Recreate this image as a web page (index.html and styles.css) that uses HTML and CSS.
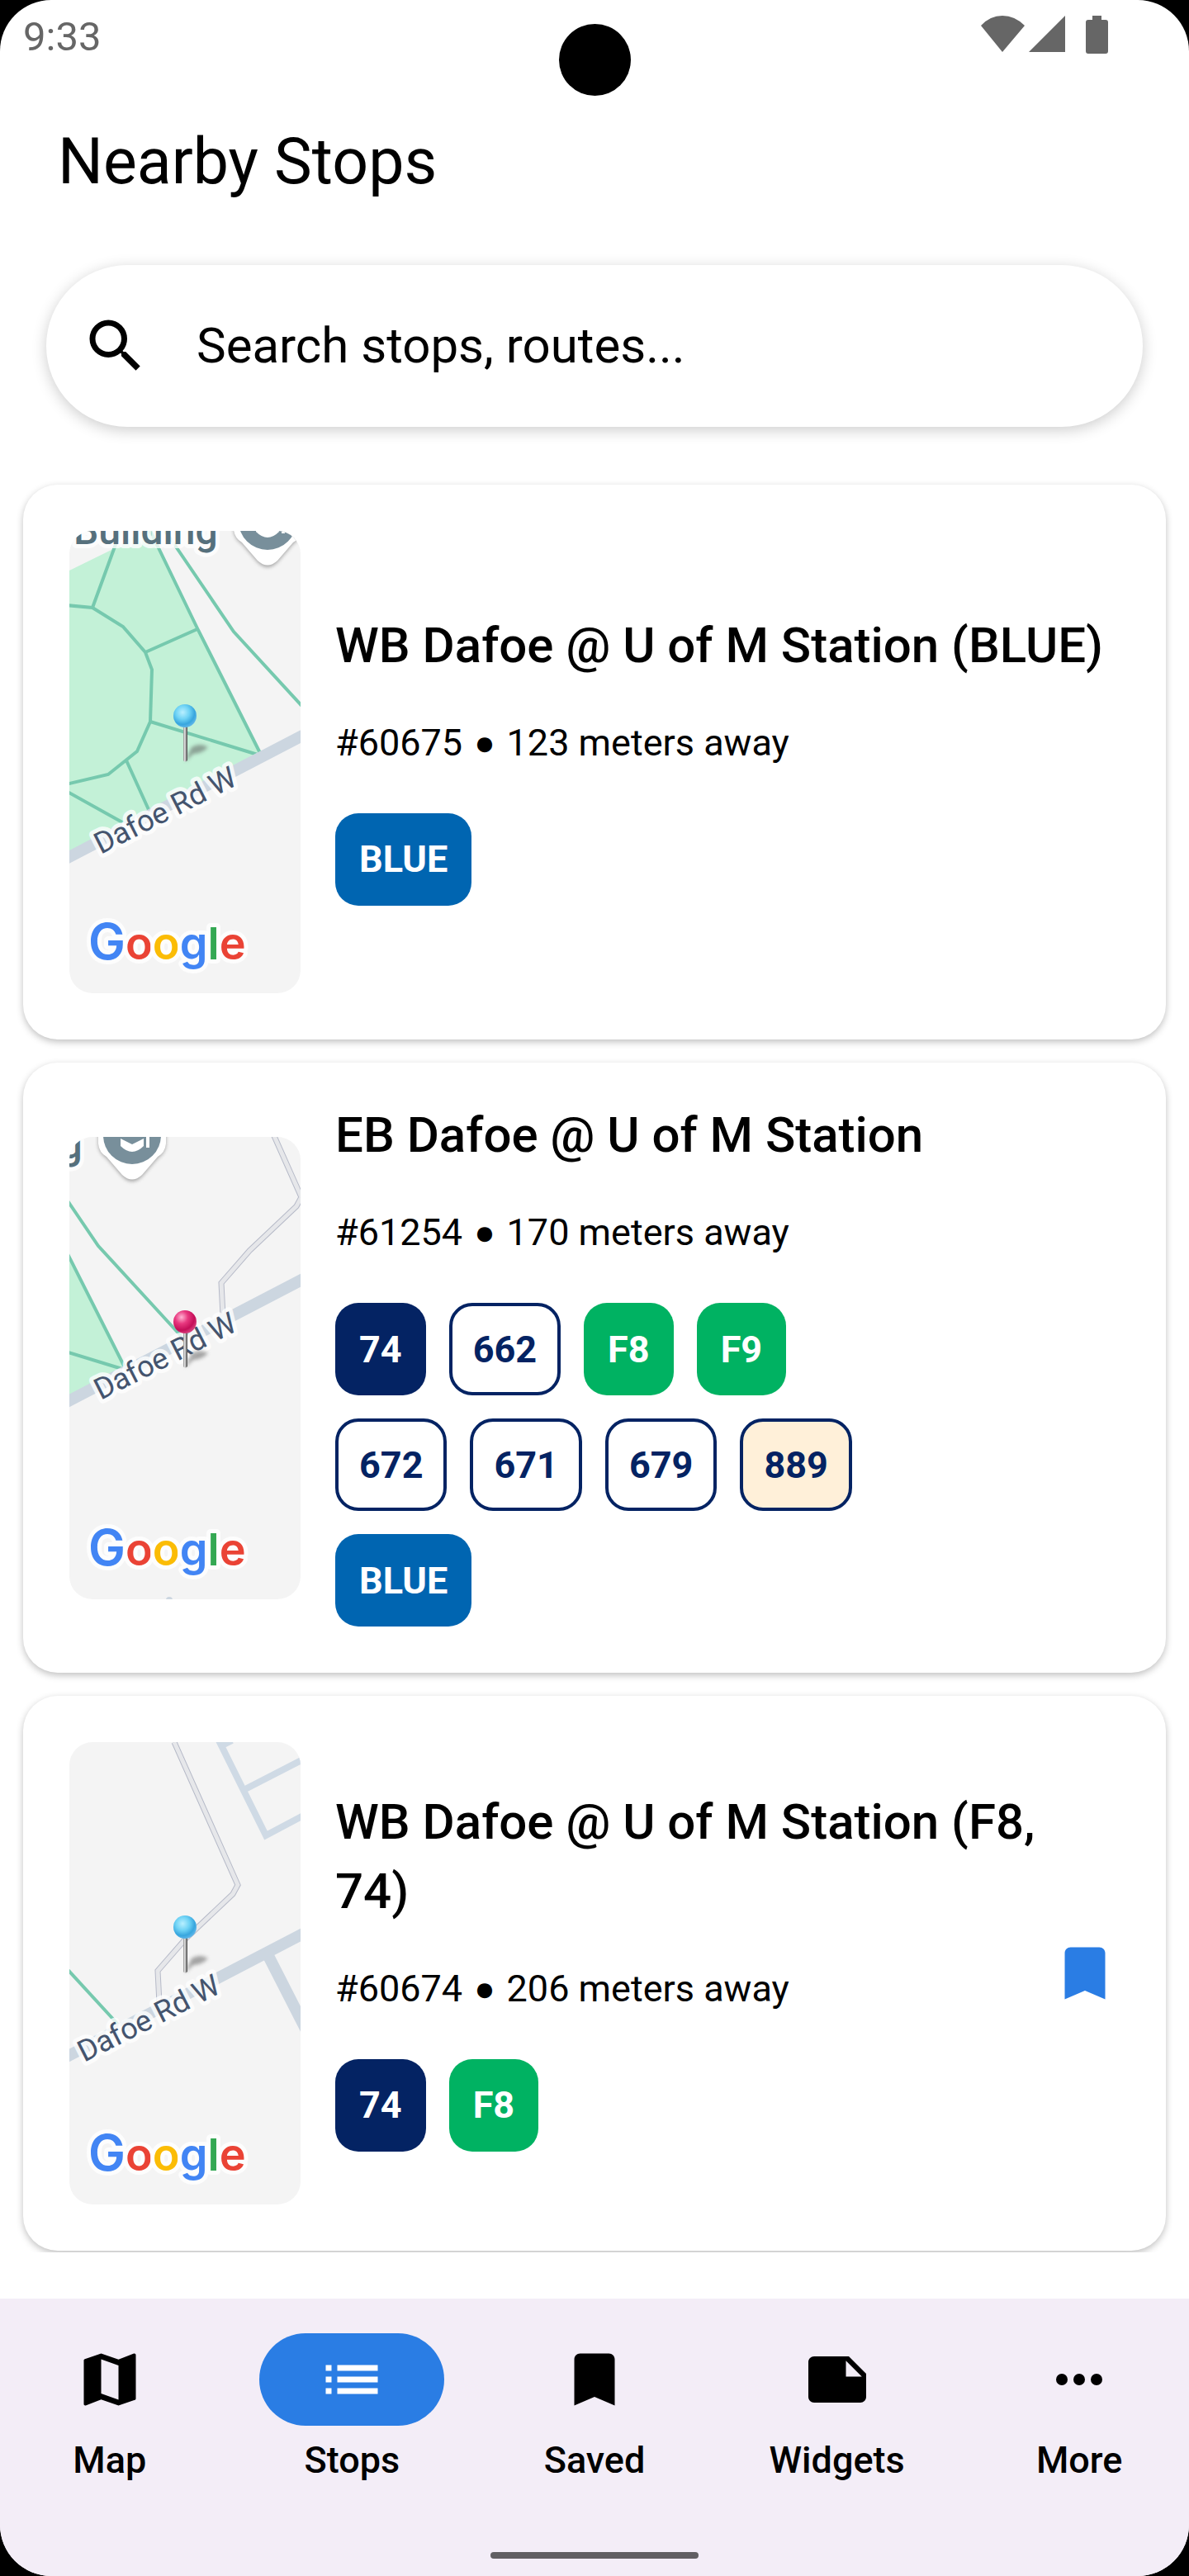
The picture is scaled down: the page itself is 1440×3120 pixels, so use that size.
FILE: index.html
```html
<!DOCTYPE html>
<html lang="en">
<head>
<meta charset="utf-8">
<meta name="viewport" content="width=device-width, initial-scale=1">
<title>Nearby Stops</title>
<link rel="stylesheet" href="styles.css">
</head>
<body>
<svg class="defs" aria-hidden="true">
  <defs>
    <radialGradient id="ball-blue" cx="40%" cy="35%" r="65%">
      <stop offset="0" stop-color="#b9efff"/>
      <stop offset=".45" stop-color="#6fd3f5"/>
      <stop offset=".8" stop-color="#38a6de"/>
      <stop offset="1" stop-color="#5ab4e8"/>
    </radialGradient>
    <radialGradient id="ball-pink" cx="35%" cy="30%" r="70%">
      <stop offset="0" stop-color="#ffb3d2"/>
      <stop offset=".4" stop-color="#e8387f"/>
      <stop offset=".8" stop-color="#c40e58"/>
      <stop offset="1" stop-color="#d43a78"/>
    </radialGradient>
    <linearGradient id="stem">
      <stop offset="0" stop-color="#8a8a8a"/>
      <stop offset=".35" stop-color="#e6e6e6"/>
      <stop offset="1" stop-color="#3c3c3c"/>
    </linearGradient>
    <filter id="soft" x="-30%" y="-30%" width="160%" height="160%">
      <feGaussianBlur stdDeviation="2"/>
    </filter>

    <g id="streets">
      <path fill="#c3f1d7" d="M0 48 55 21 88 0H100L155 118 231 269 0 388Z"/>
      <g class="footpath">
        <path d="M-4 90 28 93 65 116 92 147 100 168 98 231 82 267 47 295-4 307"/>
        <path d="M28 93 62 0M92 147 155 119M98 0 155 118 231 269M98 231 228 271M69 278 98 342M-4 315 66 354"/>
        <path d="M116 0 199 122 300 232"/>
      </g>
      <path class="service-edge" d="M368-110 445 63 439 74 382 128 348 167 350 206"/>
      <path class="service" d="M368-110 445 63 439 74 382 128 348 167 350 206"/>
      <path class="lane" d="M422-112 479 3 526-22M452-52 526-90M424-105 438-112"/>
      <path class="road" d="M-8 399 530 119M480 145 530 243"/>
    </g>

    <g id="poi">
      <path filter="url(#soft)" fill="#777" opacity=".6" d="M-41-42Q-40-32-31-26L-12-4Q0 8 12-4L31-26Q40-32 41-42L41-60H-41Z"/>
      <path fill="#fff" d="M-41-44Q-40-33-31-28L-12-6Q0 5 12-6L31-28Q40-33 41-44L41-60H-41Z"/>
      <circle cy="-54" r="35" fill="#788f9b"/>
      <path fill="#fff" d="M-14-50 0-43 14-50V-41Q0-27-14-41ZM17-56H21V-39H17Z"/>
    </g>

    <g id="pin-base">
      <path filter="url(#soft)" fill="#555" opacity=".5" d="M140 280 148 262Q158 256 168 262 160 270 150 270Z"/>
      <path fill="url(#stem)" d="M138 234H143V278Q140 281 138 278Z"/>
    </g>
  </defs>
</svg>

<div class="screen">
  <span class="camera"></span>

  <div class="status">
    <time>9:33</time>
    <svg class="status-icons" viewBox="0 0 154 49" aria-hidden="true">
      <path d="M0 15Q11 3 26 3T53 15L26 47ZM102 3V47H58ZM135 3H146V8H151Q154 8 154 11V46Q154 49 151 49H130Q127 49 127 46V11Q127 8 130 8H135Z"/>
    </svg>
  </div>

  <h1 class="page-title">Nearby Stops</h1>

  <label class="search">
    <svg class="icon" viewBox="0 0 24 24" aria-hidden="true"><path d="M15.5 14h-.79l-.28-.27A6.471 6.471 0 0 0 16 9.5 6.5 6.5 0 1 0 9.500 16c1.610 0 3.090-.59 4.230-1.570l.27.28v.79l5 4.990L20.490 19l-4.990-5zm-6 0C7.010 14 5 11.990 5 9.500S7.010 5 9.500 5 14 7.010 14 9.500 11.990 14 9.500 14z"/></svg>
    <input class="search-input" type="text" placeholder="Search stops, routes..." aria-label="Search stops, routes">
  </label>

  <main class="stops">
    <article class="card">
      <svg class="map" viewBox="0 0 280 560" role="img" aria-label="Map of stop 60675">
        <use href="#streets"/>
        <text class="place" x="5" y="16">Building</text>
        <use href="#poi" x="240" y="42"/>
        <text class="street" transform="translate(38 392) rotate(-27)">Dafoe Rd W</text>
        <use href="#pin-base"/>
        <circle cx="140" cy="224" r="14" fill="url(#ball-blue)"/>
        <text class="brand" x="23" y="519"><tspan class="brand-cap g-blue">G</tspan><tspan class="g-red">o</tspan><tspan class="g-yellow">o</tspan><tspan class="g-blue">g</tspan><tspan class="g-green">l</tspan><tspan class="g-red">e</tspan></text>
      </svg>
      <div class="info">
        <h2 class="name">WB Dafoe @ U of M Station (BLUE)</h2>
        <p class="meta"><span>#60675</span><span class="dot">●</span><span>123 meters away</span></p>
        <ul class="routes">
          <li class="route blue">BLUE</li>
        </ul>
      </div>
    </article>

    <article class="card">
      <svg class="map" viewBox="0 0 280 560" role="img" aria-label="Map of stop 61254">
        <use href="#streets" x="-164" y="10"/>
        <text class="place" x="-159" y="26">Building</text>
        <use href="#poi" x="76" y="52"/>
        <circle cx="121" cy="561" r="4" fill="#ccd6e0"/>
        <text class="street" transform="translate(38 319) rotate(-27)">Dafoe Rd W</text>
        <use href="#pin-base"/>
        <circle cx="140" cy="224" r="14" fill="url(#ball-pink)"/>
        <text class="brand" x="23" y="519"><tspan class="brand-cap g-blue">G</tspan><tspan class="g-red">o</tspan><tspan class="g-yellow">o</tspan><tspan class="g-blue">g</tspan><tspan class="g-green">l</tspan><tspan class="g-red">e</tspan></text>
      </svg>
      <div class="info">
        <h2 class="name">EB Dafoe @ U of M Station</h2>
        <p class="meta"><span>#61254</span><span class="dot">●</span><span>170 meters away</span></p>
        <ul class="routes">
          <li class="route navy">74</li>
          <li class="route outline">662</li>
          <li class="route green">F8</li>
          <li class="route green">F9</li>
          <li class="route outline">672</li>
          <li class="route outline">671</li>
          <li class="route outline">679</li>
          <li class="route outline cream">889</li>
          <li class="route blue">BLUE</li>
        </ul>
      </div>
    </article>

    <article class="card">
      <svg class="map" viewBox="0 0 280 560" role="img" aria-label="Map of stop 60674">
        <use href="#streets" x="-241" y="110"/>
        <text class="street" transform="translate(18 388) rotate(-27)">Dafoe Rd W</text>
        <use href="#pin-base"/>
        <circle cx="140" cy="224" r="14" fill="url(#ball-blue)"/>
        <text class="brand" x="23" y="519"><tspan class="brand-cap g-blue">G</tspan><tspan class="g-red">o</tspan><tspan class="g-yellow">o</tspan><tspan class="g-blue">g</tspan><tspan class="g-green">l</tspan><tspan class="g-red">e</tspan></text>
      </svg>
      <div class="info">
        <h2 class="name">WB Dafoe @ U of M Station (F8, 74)</h2>
        <p class="meta"><span>#60674</span><span class="dot">●</span><span>206 meters away</span></p>
        <ul class="routes">
          <li class="route navy">74</li>
          <li class="route green">F8</li>
        </ul>
      </div>
      <button class="save" type="button" aria-label="Remove from saved">
        <svg class="icon" viewBox="0 0 24 24" aria-hidden="true"><path d="M17 3H7c-1.100 0-1.990.9-1.990 2L5 21l7-3 7 3V5c0-1.100-.9-2-2-2z"/></svg>
      </button>
    </article>
  </main>

  <footer class="bottom">
    <nav class="tabs">
      <a class="tab" href="#map">
        <span class="tab-icon"><svg class="icon" viewBox="0 0 24 24" aria-hidden="true"><path d="M20.5 3l-.16.03L15 5.1 9 3 3.360 4.900c-.21.07-.36.25-.36.48V20.500c0 .28.22.5.5.5l.16-.03L9 18.900l6 2.100 5.640-1.900c.21-.07.36-.25.36-.48V3.500c0-.28-.22-.5-.5-.5zM15 19l-6-2.110V5l6 2.110V19z"/></svg></span>
        Map
      </a>
      <a class="tab active" href="#stops" aria-current="page">
        <span class="tab-icon"><svg class="icon" viewBox="0 0 24 24" aria-hidden="true"><path d="M3 13h2v-2H3v2zm0 4h2v-2H3v2zm0-8h2V7H3v2zm4 4h14v-2H7v2zm0 4h14v-2H7v2zM7 7v2h14V7H7z"/></svg></span>
        Stops
      </a>
      <a class="tab" href="#saved">
        <span class="tab-icon"><svg class="icon" viewBox="0 0 24 24" aria-hidden="true"><path d="M17 3H7c-1.100 0-1.990.9-1.990 2L5 21l7-3 7 3V5c0-1.100-.9-2-2-2z"/></svg></span>
        Saved
      </a>
      <a class="tab" href="#widgets">
        <span class="tab-icon"><svg class="icon" viewBox="0 0 24 24" aria-hidden="true"><path d="M22 10l-6-6H4c-1.100 0-2 .9-2 2v12.010c0 1.100.9 1.990 2 1.990l16-.01c1.100 0 2-.89 2-1.990v-8zm-7-4.500l5.500 5.500H15V5.500z"/></svg></span>
        Widgets
      </a>
      <a class="tab" href="#more">
        <span class="tab-icon"><svg class="icon" viewBox="0 0 24 24" aria-hidden="true"><circle cx="6" cy="12" r="2"/><circle cx="12" cy="12" r="2"/><circle cx="18" cy="12" r="2"/></svg></span>
        More
      </a>
    </nav>
    <span class="handle"></span>
  </footer>
</div>
</body>
</html>
```
FILE: styles.css
```css
* {
  box-sizing: border-box;
}

body {
  margin: 0;
  background: #000;
  color: #000;
  font-family: Roboto, "Liberation Sans", sans-serif;
}

.defs {
  position: absolute;
  width: 0;
  height: 0;
}

.screen {
  position: relative;
  display: flex;
  flex-direction: column;
  min-height: 100vh;
  overflow: hidden;
  border-radius: 62px;
  background: #fff;
}

/* Status bar */
.camera {
  position: absolute;
  top: 29px;
  left: 50%;
  width: 87px;
  height: 87px;
  margin-left: -43px;
  border-radius: 50%;
  background: #000;
}

.status {
  display: flex;
  align-items: flex-start;
  justify-content: space-between;
  padding: 16px 98px 0 28px;
  color: #666;
  font-size: 49px;
  line-height: 58px;
}

.status-icons {
  width: 154px;
  height: 49px;
  fill: #666;
}

.page-title {
  margin: 77px 70px 80px;
  font-size: 77px;
  font-weight: 400;
  line-height: 90px;
}

.icon {
  display: block;
  flex: none;
  width: 84px;
  height: 84px;
  fill: currentColor;
}

/* Search */
.search {
  display: flex;
  align-items: center;
  gap: 56px;
  margin: 0 56px;
  padding: 56px 42px;
  border-radius: 98px;
  background: #fff;
  box-shadow: 0 4px 18px rgba(0, 0, 0, .2);
}

.search-input {
  flex: 1;
  min-width: 0;
  height: 84px;
  padding: 0;
  border: 0;
  outline: 0;
  background: none;
  color: #000;
  font: 400 60px/84px Roboto, "Liberation Sans", sans-serif;
}

.search-input::placeholder {
  color: #000;
  opacity: 1;
}

/* Stop cards */
.stops {
  display: flex;
  flex-direction: column;
  gap: 28px;
  margin: 42px 0 56px;
  padding: 28px 28px 2px;
  overflow: hidden;
}

.card {
  display: flex;
  align-items: center;
  gap: 42px;
  padding: 56px;
  border-radius: 42px;
  background: #fff;
  box-shadow: 0 3px 8px rgba(0, 0, 0, .25);
}

.map {
  display: block;
  flex: none;
  width: 280px;
  height: 560px;
  border-radius: 28px;
  background: #f4f4f4;
}

.info {
  flex: 1;
  min-width: 0;
}

.name {
  margin: -10px 0 46px;
  font-size: 60px;
  font-weight: 500;
  line-height: 84px;
}

.meta {
  display: flex;
  gap: 14px;
  margin: 0 0 55px;
  font-size: 45px;
  line-height: 60px;
}

.dot {
  font-size: 42px;
}

.routes {
  display: flex;
  flex-wrap: wrap;
  gap: 28px;
  max-width: 70%;
  margin: 0;
  padding: 0;
  list-style: none;
}

.route {
  display: flex;
  align-items: center;
  height: 112px;
  padding: 0 29px;
  border-radius: 28px;
  color: #fff;
  font-size: 45px;
  font-weight: 700;
}

.blue {
  background: #0065b1;
}

.navy {
  background: #042363;
}

.green {
  background: #00b262;
}

.outline {
  padding: 0 25px;
  border: 4px solid #042363;
  color: #042363;
}

.cream {
  background: #fff0d9;
}

.save {
  padding: 0;
  border: 0;
  margin-left: -42px;
  background: none;
  color: #2a7de4;
}

/* Map drawings */
.footpath {
  fill: none;
  stroke: #76c9ae;
  stroke-width: 4;
}

.service-edge {
  fill: none;
  stroke: #b6bac8;
  stroke-width: 7;
}

.service {
  fill: none;
  stroke: #e6e7ea;
  stroke-width: 5;
}

.lane {
  fill: none;
  stroke: #cfdae5;
  stroke-width: 8;
}

.road {
  fill: none;
  stroke: #ccd6e0;
  stroke-width: 14;
}

.place,
.street,
.brand {
  stroke: rgba(255, 255, 255, .8);
  stroke-linejoin: round;
  stroke-width: 10;
  paint-order: stroke;
}

.place {
  fill: #56707c;
  font-size: 48px;
  font-weight: 500;
}

.street {
  fill: #44546e;
  font-size: 36px;
}

.brand {
  font-family: Inter, "Liberation Sans", sans-serif;
  font-size: 54px;
  font-weight: 600;
}

.brand-cap {
  font-size: 60px;
}

.g-blue {
  fill: #4285f4;
}

.g-red {
  fill: #ea4335;
}

.g-yellow {
  fill: #fbbc05;
}

.g-green {
  fill: #34a853;
}

/* Bottom navigation */
.bottom {
  display: flex;
  flex-direction: column;
  align-items: center;
  gap: 83px;
  margin-top: auto;
  padding: 42px 0 21px;
  background: #f3edf7;
}

.tabs {
  display: flex;
  gap: 28px;
  width: 100%;
}

.tab {
  display: flex;
  flex: 1 1 0;
  flex-direction: column;
  align-items: center;
  gap: 14px;
  color: #000;
  font-size: 45px;
  font-weight: 500;
  line-height: 56px;
  text-decoration: none;
}

.tab-icon {
  padding: 14px 70px;
  border-radius: 56px;
}

.active .tab-icon {
  background: #2a7de4;
  color: #fff;
}

.handle {
  width: 252px;
  height: 8px;
  border-radius: 4px;
  background: #615f63;
}
```
